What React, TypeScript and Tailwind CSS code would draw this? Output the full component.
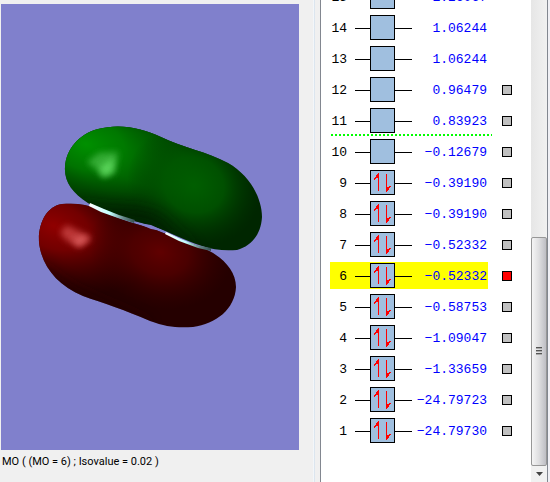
import { useState } from 'react';

interface Orbital {
	index: number;
	energy: string;
	occupied: boolean;
	selectable: boolean;
}

const ORBITALS: Orbital[] = [
	{ index: 15, energy: '1.26067', occupied: false, selectable: false },
	{ index: 14, energy: '1.06244', occupied: false, selectable: false },
	{ index: 13, energy: '1.06244', occupied: false, selectable: false },
	{ index: 12, energy: '0.96479', occupied: false, selectable: true },
	{ index: 11, energy: '0.83923', occupied: false, selectable: true },
	{ index: 10, energy: '−0.12679', occupied: false, selectable: true },
	{ index: 9, energy: '−0.39190', occupied: true, selectable: true },
	{ index: 8, energy: '−0.39190', occupied: true, selectable: true },
	{ index: 7, energy: '−0.52332', occupied: true, selectable: true },
	{ index: 6, energy: '−0.52332', occupied: true, selectable: true },
	{ index: 5, energy: '−0.58753', occupied: true, selectable: true },
	{ index: 4, energy: '−1.09047', occupied: true, selectable: true },
	{ index: 3, energy: '−1.33659', occupied: true, selectable: true },
	{ index: 2, energy: '−24.79723', occupied: true, selectable: true },
	{ index: 1, energy: '−24.79730', occupied: true, selectable: true },
];

// The dashed divider is drawn directly under this level
const DIVIDER_INDEX = 11;

const UPPER_LOBE =
	'M65 167C66 149 79 134 98 129C120 123 142 128 161 137C181 147 208 152 228 163C249 175 262 197 262 217C261 234 252 246 237 250C225 251 213 250 202 246C184 240 170 232 155 227C135 220 109 217 88 203C72 193 64 181 65 167Z';
const LOWER_LOBE =
	'M39 242C38 223 47 206 62 204C75 203 87 204 98 209C113 217 132 223 150 228C168 234 182 241 198 246C220 254 236 269 236 287C235 309 216 324 193 327C177 328 166 327 150 321C125 310 103 303 83 296C56 285 41 264 39 242Z';

function OrbitalSurface() {
	return (
		<svg viewBox="1 4 298 446" className="h-full w-full" role="img" aria-label="Molecular orbital surface">
			<defs>
				<clipPath id="upper">
					<path d={UPPER_LOBE} />
				</clipPath>
				<clipPath id="lower">
					<path d={LOWER_LOBE} />
				</clipPath>
				<radialGradient id="greenLeft">
					<stop offset="0" stopColor="#009000" />
					<stop offset="0.35" stopColor="#008000" stopOpacity="0.85" />
					<stop offset="1" stopColor="#004800" stopOpacity="0" />
				</radialGradient>
				<radialGradient id="greenRight">
					<stop offset="0" stopColor="#005e00" />
					<stop offset="0.45" stopColor="#005600" stopOpacity="0.85" />
					<stop offset="1" stopColor="#003800" stopOpacity="0" />
				</radialGradient>
				<radialGradient id="redLeft">
					<stop offset="0" stopColor="#900000" />
					<stop offset="0.35" stopColor="#800000" stopOpacity="0.85" />
					<stop offset="1" stopColor="#480000" stopOpacity="0" />
				</radialGradient>
				<radialGradient id="redRight">
					<stop offset="0" stopColor="#600000" />
					<stop offset="0.4" stopColor="#540000" stopOpacity="0.8" />
					<stop offset="1" stopColor="#380000" stopOpacity="0" />
				</radialGradient>
				<linearGradient id="rim">
					<stop offset="0" stopColor="#fff" />
					<stop offset="0.45" stopColor="#c4ffff" />
					<stop offset="0.75" stopColor="#658888" />
					<stop offset="1" stopColor="#345050" />
				</linearGradient>
				<filter id="soft" x="-40%" y="-40%" width="180%" height="180%">
					<feGaussianBlur stdDeviation="7" />
				</filter>
				<filter id="glint" x="-40%" y="-40%" width="180%" height="180%">
					<feGaussianBlur stdDeviation="3" />
				</filter>
			</defs>
			<path d={LOWER_LOBE} fill="#250000" />
			<g clipPath="url(#lower)">
				<ellipse cx="54" cy="226" rx="104" ry="64" transform="rotate(18 54 226)" fill="url(#redLeft)" />
				<ellipse cx="160" cy="252" rx="72" ry="56" transform="rotate(15 160 252)" fill="url(#redRight)" />
				<path d="M42 262C60 288 104 300 151 323L132 344L40 310Z" fill="#220000" opacity="0.65" filter="url(#soft)" />
				<path d="M60 233L66 225L90 236L91 240L79 248L66 240Z" fill="#d65050" opacity="0.7" filter="url(#glint)" />
				<path d="M72 239L84 236L88 239L79 246Z" fill="#df6060" opacity="0.9" filter="url(#glint)" />
			</g>
			<path d={UPPER_LOBE} fill="#002600" />
			<g clipPath="url(#upper)">
				<ellipse cx="146" cy="160" rx="94" ry="54" transform="rotate(20 146 160)" fill="url(#greenRight)" />
				<ellipse cx="86" cy="144" rx="112" ry="72" transform="rotate(15 86 144)" fill="url(#greenLeft)" />
				<ellipse cx="194" cy="185" rx="68" ry="60" transform="rotate(25 194 185)" fill="url(#greenRight)" />
				<path d="M80 202C104 212 134 203 160 215L198 250L160 250L80 223Z" fill="#002400" opacity="0.65" filter="url(#soft)" />
				<path d="M87 162L99 153L118 152L115 173L103 178L95 168Z" fill="#43b843" opacity="0.8" filter="url(#glint)" />
				<path d="M100 167L114 158L112 172L103 176Z" fill="#5fda5f" opacity="0.9" filter="url(#glint)" />
			</g>
			<path d="M90 203L104 209L119 215L135 220L134 223L118 218L101 212L89 206Z" fill="url(#rim)" />
			<path d="M166 232L181 239L196 245L211 248V251L198 248L179 241L165 234Z" fill="url(#rim)" />
			<path d="M137 223L151 225L164 231L151 229Z" fill="#8080cc" />
		</svg>
	);
}

function LevelSlot({ occupied }: Readonly<{ occupied: boolean }>) {
	return (
		<svg viewBox="0 0 57 25" className="h-[25px] w-[57px] shrink-0" shapeRendering="crispEdges" aria-hidden="true">
			<path d="M0 13.5H57" stroke="#000" />
			<rect x="15.5" y="0.5" width="24" height="24" fill="#a0bfdf" stroke="#000" />
			{occupied && (
				<>
					<path d="M23 3H24V21H23V8H21V9H20V10H19V8H20V7H21V5H22V4H23Z" fill="#f00" />
					<path d="M31 4H32V17H34V16H36V17H35V18H34V20H33V21H32V22H31Z" fill="#f00" />
				</>
			)}
		</svg>
	);
}

interface OrbitalRowProps {
	orbital: Orbital;
	active: boolean;
	onSelect: (index: number) => void;
}

function OrbitalRow({ orbital, active, onSelect }: Readonly<OrbitalRowProps>) {
	return (
		<li>
			<label className="flex h-[31px] items-center gap-3.5">
				<span className={`flex h-[27px] w-[158px] items-center pr-px ${active ? 'bg-[#ffff00]' : ''}`}>
					<span className="w-[17px] pt-0.5 text-right">{orbital.index}</span>
					<span className="ml-2">
						<LevelSlot occupied={orbital.occupied} />
					</span>
					<span className="flex-1 pt-0.5 text-right text-[#0000ff]">{orbital.energy}</span>
				</span>
				{orbital.selectable && (
					<input
						type="checkbox"
						checked={active}
						onChange={() => onSelect(orbital.index)}
						className="size-2.5 appearance-none border border-black bg-[#c0c0c0] checked:bg-[#ff0000]"
					/>
				)}
			</label>
			{orbital.index === DIVIDER_INDEX && (
				<div className="-mt-0.5 ml-px h-0.5 w-[161px] bg-[repeating-linear-gradient(90deg,#00ff00_0_2px,transparent_2px_4px)]" />
			)}
		</li>
	);
}

function ScrollBar() {
	return (
		<div className="flex w-4 shrink-0 flex-col bg-linear-to-r from-[#e6e6e6] to-[#f1f1f1]">
			<div className="flex-1" />
			<div className="flex h-[229px] items-center justify-center rounded-xs border border-[#979797] bg-linear-to-r from-[#f5f5f5] via-[#dedee0] to-[#bebec4]">
				<svg viewBox="0 0 6 9" className="h-[9px] w-1.5" shapeRendering="crispEdges" aria-hidden="true">
					<path d="M0 0.5H6M0 3.5H6M0 6.5H6" stroke="#555" />
					<path d="M0 1.5H6M0 4.5H6M0 7.5H6" stroke="#aaa" />
				</svg>
			</div>
			<button type="button" aria-label="Scroll down" className="flex h-4 items-center justify-center bg-[#f1f1f1]">
				<svg viewBox="0 0 7 4" className="h-1 w-[7px]" aria-hidden="true">
					<path d="M0 0H7L3.5 4Z" fill="#444" />
				</svg>
			</button>
		</div>
	);
}

export default function App() {
	const [selected, setSelected] = useState(6);

	return (
		<div className="flex h-screen overflow-hidden bg-[#f0f0f0] text-black">
			<section className="flex min-w-0 flex-1 flex-col pt-1 pl-px">
				<div className="mr-3.5 min-h-0 flex-1 bg-[#8080cc]">
					<OrbitalSurface />
				</div>
				<p className="h-8 pt-1 pl-px font-[Roboto,sans-serif] text-[11px] leading-4">
					MO ( (MO = {selected}) ; Isovalue = 0.02 )
				</p>
			</section>
			<div className="mr-[5px] w-0.5 bg-linear-to-r from-white to-[#d0dde9]" />
			<section className="flex w-[228px] shrink-0 border-x border-[#828790] bg-white">
				<ul className="flex flex-1 flex-col justify-end overflow-hidden pb-9 pl-[9px] font-['Liberation_Mono',monospace] text-[13px] leading-4">
					{ORBITALS.map(orbital => (
						<OrbitalRow key={orbital.index} orbital={orbital} active={orbital.index === selected} onSelect={setSelected} />
					))}
				</ul>
				<ScrollBar />
			</section>
			<div className="w-0.5 bg-[#f0f0f5]" />
		</div>
	);
}
